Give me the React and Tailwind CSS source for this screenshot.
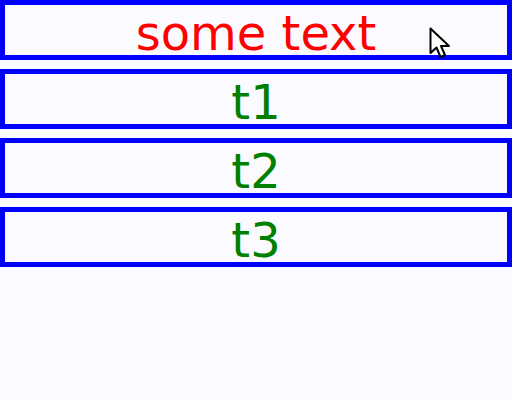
const items = ['t1', 't2', 't3'];

const Cursor = () => (
  <svg className="absolute left-[429px] top-[27px]" width="24" height="34" viewBox="0 0 24 34">
    <path d="M1.5 1.5 L1.5 26 L7.5 20.5 L11.5 30 L16 28 L12 19 L20 19 Z" fill="#fff" stroke="#000" strokeWidth="2" strokeLinejoin="round" />
  </svg>
);

export default function App() {
  return (
    <div className="relative w-[512px] h-[400px] bg-[#fbfbff] flex flex-col gap-[9px] font-['DejaVu_Sans',sans-serif]">
      <div className="h-[60px] border-[5px] border-[#0000ff] pt-[6px] flex items-center justify-center text-[48px] leading-none text-[#ff0000]">
        some text
      </div>
      {items.map((t) => (
        <div key={t} className="h-[60px] border-[5px] border-[#0000ff] pt-[6px] flex items-center justify-center text-[48px] leading-none text-[#008000]">
          {t}
        </div>
      ))}
      <Cursor />
    </div>
  );
}
